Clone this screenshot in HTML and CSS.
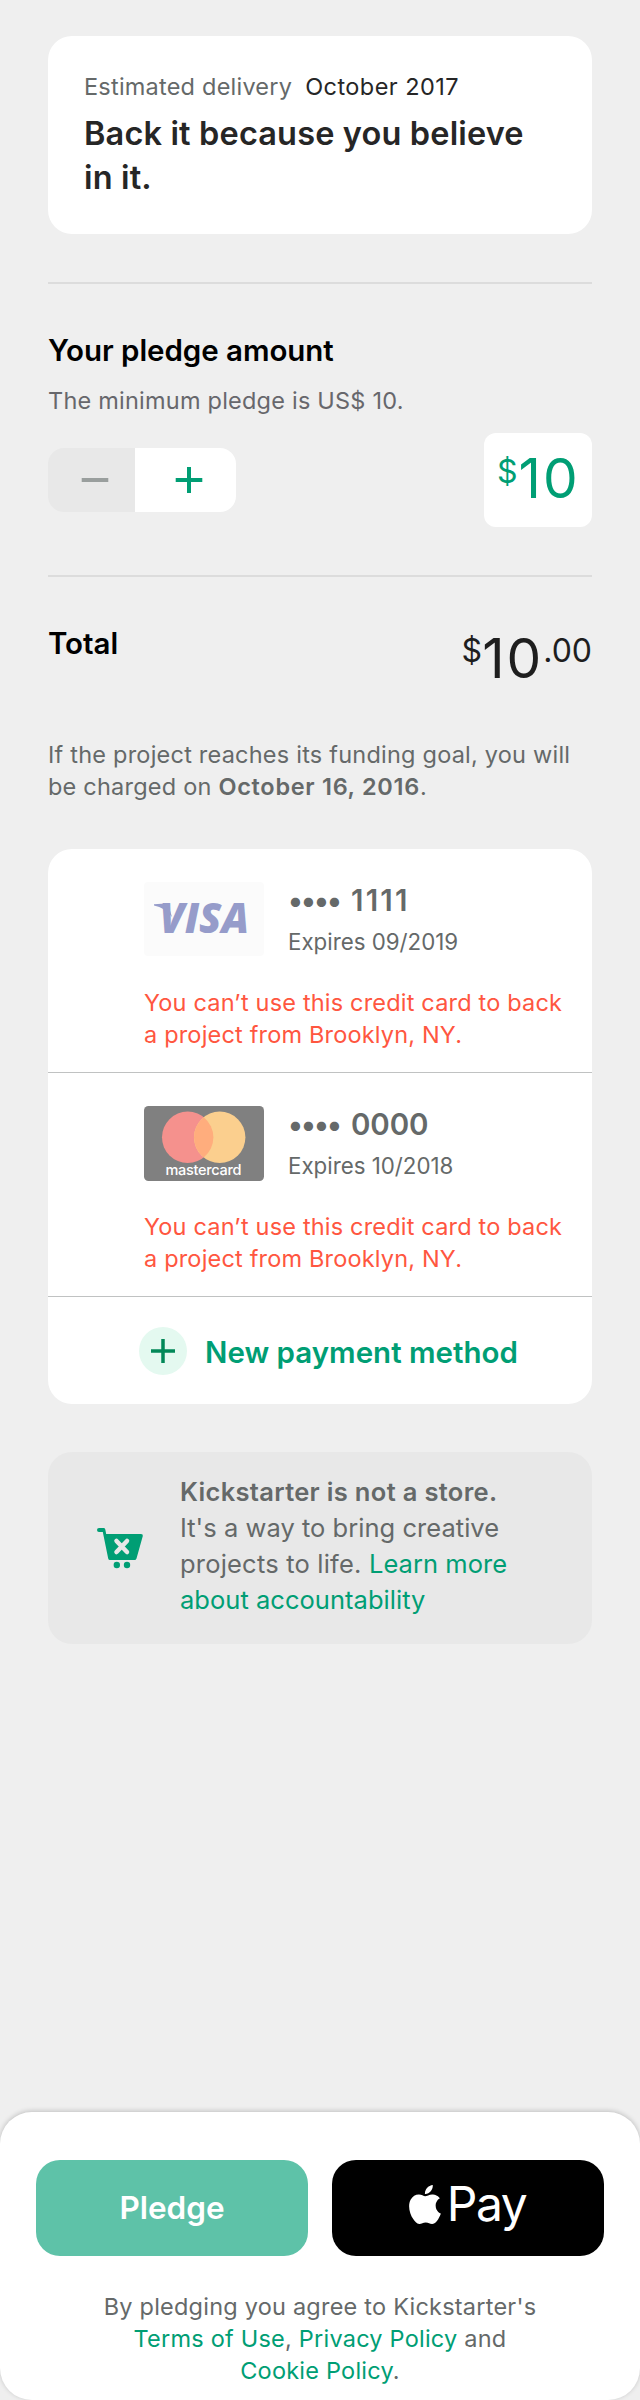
FILE: index.html
```
<!DOCTYPE html>
<html lang="en">
<head>
<meta charset="utf-8">
<title>Pledge</title>
<link rel="stylesheet" href="styles.css">
</head>
<body>
<main class="content">
  <section class="reward">
    <p class="delivery"><span class="delivery-label">Estimated delivery</span><span class="delivery-date">October 2017</span></p>
    <h1 class="reward-title">Back it because you believe in it.</h1>
  </section>

  <hr class="rule">

  <section>
    <h2 class="heading">Your pledge amount</h2>
    <p class="minimum">The minimum pledge is US$ 10.</p>
    <div class="amount-row">
      <div class="stepper">
        <button class="step step-minus" aria-label="Decrease"><svg width="28" height="28" viewBox="0 0 28 28"><path d="M.7 14H27.3" stroke="currentColor" stroke-width="4"/></svg></button>
        <button class="step step-plus" aria-label="Increase"><svg width="28" height="28" viewBox="0 0 28 28"><path d="M.7 14H27.3M14 1V27" stroke="currentColor" stroke-width="4"/></svg></button>
      </div>
      <div class="amount-box"><span class="price-small amount-currency">$</span><span class="price-big">10</span></div>
    </div>
  </section>

  <hr class="rule">

  <section class="total">
    <h2 class="heading">Total</h2>
    <div class="total-price"><span class="price-small">$</span><span class="price-big">10</span><span class="price-small cents">.00</span></div>
  </section>

  <p class="charge-note">If the project reaches its funding goal, you will be charged on <b>October 16, 2016</b>.</p>

  <section class="cards">
    <article class="card">
      <div class="card-info">
        <svg class="card-logo" width="120" height="75" viewBox="0 0 120 75" role="img" aria-label="Visa">
          <rect width="120" height="74" rx="4" fill="#fbfbfb"/>
          <path d="M10 22.2Q18 21.300 24 22.200L28 35Q21 25.500 10 23.400Z" fill="#969cca"/>
          <text class="visa" x="15.500" y="51.400" textLength="89.500" lengthAdjust="spacingAndGlyphs">VISA</text>
        </svg>
        <div>
          <p class="card-number"><span class="dots">••••</span><span class="ones">1111</span></p>
          <p class="expires">Expires 09/2019</p>
        </div>
      </div>
      <p class="error">You can’t use this credit card to back a project from Brooklyn, NY.</p>
    </article>
    <article class="card">
      <div class="card-info">
        <svg class="card-logo" width="120" height="75" viewBox="0 0 120 75" role="img" aria-label="Mastercard">
          <rect width="120" height="75" rx="4.500" fill="#808080"/>
          <circle cx="43.700" cy="31.300" r="25.700" fill="#f5918d"/>
          <circle cx="75.700" cy="31.300" r="25.700" fill="#fbcf8e"/>
          <path d="M59.700 11.200A25.700 25.700 0 0 1 59.700 51.400A25.700 25.700 0 0 1 59.700 11.200Z" fill="#ffad7d"/>
          <text class="mastercard" x="21.500" y="69" textLength="76">mastercard</text>
        </svg>
        <div>
          <p class="card-number"><span class="dots">••••</span><span>0000</span></p>
          <p class="expires">Expires 10/2018</p>
        </div>
      </div>
      <p class="error">You can’t use this credit card to back a project from Brooklyn, NY.</p>
    </article>
    <a class="new-method">
      <svg width="48" height="48" viewBox="0 0 48 48"><circle cx="24" cy="24" r="24" fill="#e4f9f0"/><path d="M12 24H36M24 12V36" stroke="#028858" stroke-width="3.500"/></svg>
      <span class="new-method-label">New payment method</span>
    </a>
  </section>

  <aside class="notice">
    <svg class="cart" width="48" height="44" viewBox="0 0 48 44">
      <path d="M3 2H7.500Q9 2 9.300 3.400L10.200 8H45Q47.200 8 46.800 10L40.500 32.500Q40 34 38.500 34H14Q12.500 34 12.200 32.500L6.800 6H3Q1 6 1 4Q1 2 3 2Z" fill="#009e74"/>
      <path d="M20.500 15L31 26M31 15L20.500 26" stroke="#e8e8e8" stroke-width="4.500" stroke-linecap="round"/>
      <circle cx="20.800" cy="39" r="3.200" fill="#009e74"/><circle cx="31" cy="39" r="3.200" fill="#009e74"/>
    </svg>
    <p class="notice-text"><b>Kickstarter is not a store.</b><br>It's a way to bring creative<br><span class="notice-lead">projects to life. </span><a>Learn more<br>about accountability</a></p>
  </aside>
</main>

<footer class="footer">
  <div class="actions">
    <button class="action pledge">Pledge</button>
    <button class="action apple-pay">
      <svg width="32" height="39" viewBox="2.200 0 19.600 24"><path fill="#fff" d="M12.152 6.896c-.948 0-2.415-1.078-3.960-1.040-2.040.027-3.910 1.183-4.961 3.014-2.117 3.675-.546 9.103 1.519 12.090 1.013 1.454 2.208 3.090 3.792 3.039 1.520-.065 2.090-.987 3.935-.987 1.831 0 2.350.987 3.960.948 1.637-.026 2.676-1.480 3.676-2.948 1.156-1.688 1.636-3.325 1.662-3.415-.039-.013-3.182-1.221-3.220-4.857-.026-3.040 2.480-4.494 2.597-4.559-1.429-2.090-3.623-2.324-4.390-2.376-2-.156-3.675 1.090-4.610 1.090zM15.530 3.830c.843-1.012 1.400-2.427 1.245-3.830-1.207.052-2.662.805-3.532 1.818-.780.896-1.454 2.338-1.273 3.714 1.338.104 2.715-.688 3.559-1.701"/></svg>
      <span>Pay</span>
    </button>
  </div>
  <p class="legal">By pledging you agree to Kickstarter's<br><a>Terms of Use</a>, <a>Privacy Policy</a> and<br><a>Cookie Policy</a>.</p>
</footer>
</body>
</html>
```
FILE: styles.css
```
* { box-sizing: border-box; }
body {
  margin: 0;
  min-height: 2400px;
  display: flex;
  flex-direction: column;
  background: #efefef;
  color: #656969;
  font: 400 23.5px/32px Inter, "Liberation Sans", sans-serif;
  letter-spacing: 0.22px;
}
p, h1, h2 { margin: 0; }
b { font-weight: 600; }
a { color: #009e74; }
svg { display: block; flex: none; }
button { border: 0; margin: 0; padding: 0; font: inherit; }

.content { padding: 36px 48px 0; }

.reward {
  height: 198px;
  padding: 35px 36px 0;
  border-radius: 24px;
  background: #fff;
}
.delivery { display: flex; gap: 13px; white-space: nowrap; }
.delivery-date { color: #262626; letter-spacing: 0.44px; }
.reward-title {
  margin-top: 9px;
  color: #262626;
  font-size: 32.5px;
  font-weight: 600;
  line-height: 44px;
  letter-spacing: 0.15px;
}
.rule { height: 2px; margin: 48px 0; border: 0; background: #dcdcdc; }

.heading {
  color: #000;
  font-size: 29.5px;
  font-weight: 600;
  line-height: 36px;
  letter-spacing: -0.05px;
}
.minimum { margin-top: 17px; color: #67676c; letter-spacing: 0.22px; }
.amount-row { display: flex; align-items: center; justify-content: space-between; margin-top: 16px; }
.stepper { display: flex; width: 188px; height: 64px; border-radius: 16px; overflow: hidden; }
.step { display: flex; align-items: center; }
.step-minus { width: 87px; padding-left: 33px; background: #e8e8e8; color: #999e9d; }
.step-plus { flex: 1; padding-left: 40px; background: #fff; color: #009e74; }
.amount-box {
  display: flex;
  align-items: flex-start;
  gap: 1px;
  width: 108px;
  height: 94px;
  padding: 18px 0 0 13px;
  border-radius: 12px;
  background: #fff;
  color: #009e74;
}
.price-big { font-size: 55px; line-height: 55px; letter-spacing: 2px; }
.price-small { font-size: 32px; line-height: 32px; padding-top: 4px; letter-spacing: 0; }
.amount-currency { padding-top: 5px; }

.total { display: flex; justify-content: space-between; height: 72px; }
.total-price { display: flex; align-items: flex-start; padding-top: 6px; color: #1e1e1e; }
.charge-note { margin-top: 42px; }
.charge-note b { letter-spacing: 0.7px; }

.cards { margin-top: 46px; border-radius: 24px; background: #fff; }
.card { height: 224px; padding: 33px 24px 0 96px; border-bottom: 1px solid #c0c2c2; }
.card-info { display: flex; gap: 24px; height: 74px; }
.card-number {
  display: flex;
  font-size: 29.5px;
  font-weight: 600;
  line-height: 36px;
  letter-spacing: -0.1px;
}
.dots { width: 63px; letter-spacing: -1.85px; }
.ones { letter-spacing: 2.19px; }
.expires { margin-top: 10px; font-size: 22.3px; line-height: 28px; letter-spacing: 0; }
.error { margin-top: 31px; color: #ff5640; letter-spacing: 0.18px; }
.visa { font: italic 800 42px "Open Sans", sans-serif; fill: #969cca; letter-spacing: 0; }
.mastercard { font-size: 14.5px; font-weight: 500; fill: #fff; letter-spacing: 0; }
.new-method { display: flex; align-items: center; height: 107px; padding-left: 91px; gap: 18px; }
.new-method-label { padding-top: 3px; font-size: 29.5px; font-weight: 600; line-height: 36px; letter-spacing: 0; }

.notice {
  display: flex;
  height: 192px;
  margin-top: 48px;
  padding: 22px 0 0 48px;
  border-radius: 24px;
  background: #e8e8e8;
}
.cart { margin-top: 52px; }
.notice-text { margin-left: 36px; font-size: 25.5px; line-height: 36px; letter-spacing: 0.03px; }
.notice-text b { letter-spacing: 0.32px; }
.notice-lead { letter-spacing: 0.2px; }

.footer {
  height: 288px;
  margin-top: auto;
  padding: 48px 36px 0;
  border-radius: 32px;
  background: #fff;
  box-shadow: 0 -1px 5px rgba(0, 0, 0, 0.2);
}
.actions { display: grid; grid-template-columns: 1fr 1fr; gap: 24px; }
.action { display: flex; align-items: center; justify-content: center; height: 96px; border-radius: 24px; color: #fff; }
.pledge { background: #5ec2a8; font-size: 31.5px; font-weight: 600; letter-spacing: 0; }
.apple-pay { gap: 6px; padding: 0 1px 8px 0; background: #000; font-size: 48px; line-height: 48px; letter-spacing: -1.45px; }
.legal { margin-top: 35px; text-align: center; white-space: nowrap; }
```
